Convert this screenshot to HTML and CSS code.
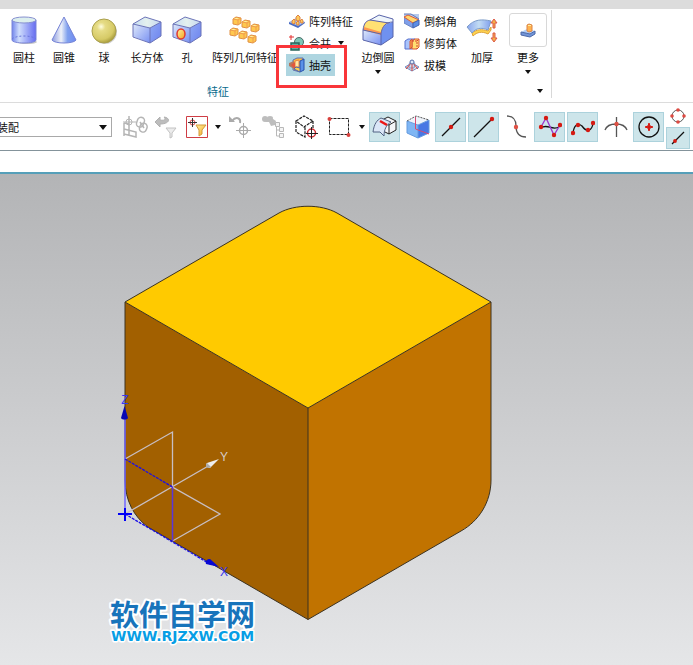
FILE: index.html
```html
<!DOCTYPE html>
<html lang="zh-CN">
<head>
<meta charset="utf-8">
<title>特征</title>
<link rel="stylesheet" href="styles.css">
</head>
<body>
<svg class="defs" aria-hidden="true">
  <defs>
    <linearGradient id="blueH"><stop offset="0" stop-color="#7285ec"/><stop offset=".3" stop-color="#cfddfc"/><stop offset="1" stop-color="#656cf0"/></linearGradient>
    <linearGradient id="coneH"><stop offset="0" stop-color="#8b9ae0"/><stop offset=".38" stop-color="#eef1f8"/><stop offset=".65" stop-color="#7fa0ee"/><stop offset="1" stop-color="#6f8af2"/></linearGradient>
    <linearGradient id="faceL" x1="0" y1="0" x2="1" y2="1"><stop offset="0" stop-color="#dfe9fa"/><stop offset="1" stop-color="#7890f2"/></linearGradient>
    <linearGradient id="faceR" x1="0" y1="0" x2="1" y2="1"><stop offset="0" stop-color="#8fa9f5"/><stop offset="1" stop-color="#6d83ee"/></linearGradient>
    <linearGradient id="faceT"><stop offset="0" stop-color="#c7dcf3"/><stop offset=".5" stop-color="#e4f1ee"/><stop offset="1" stop-color="#c4d8f0"/></linearGradient>
    <linearGradient id="gold" x1="0" y1="0" x2="1" y2="1"><stop offset="0" stop-color="#fff2a0"/><stop offset="1" stop-color="#f5a31c"/></linearGradient>
    <linearGradient id="slab"><stop offset="0" stop-color="#8aa6ee"/><stop offset=".5" stop-color="#c2dcf3"/><stop offset="1" stop-color="#7f9fee"/></linearGradient>
    <radialGradient id="ball" cx=".38" cy=".32" r=".7"><stop offset="0" stop-color="#fffde0"/><stop offset=".25" stop-color="#e6dc86"/><stop offset=".75" stop-color="#d6ca66"/><stop offset="1" stop-color="#a89c3c"/></radialGradient>
    <symbol id="cube" viewBox="0 0 30 28">
      <path d="M1 8 18 12V27L1 20.500Z" fill="url(#faceL)"/>
      <path d="M18 12 29 6V20L18 27Z" fill="url(#faceR)"/>
      <path d="M1 8 13 1 29 6 18 12Z" fill="url(#faceT)"/>
      <path d="M1 8 13 1 29 6V20L18 27 1 21ZM1 8 18 12 29 6M18 12V27" fill="none" stroke="#6b73b8"/>
    </symbol>
    <symbol id="caret" viewBox="0 0 6 4"><path d="M0 0H6L3 4Z" fill="#111"/></symbol>
    <symbol id="block" viewBox="0 0 10 10"><path d="M1 3 4 1 9 2V7L6 9 1 8Z" fill="#ffc84e" stroke="#e09044"/><path d="M1 3 6 4 9 2M6 4V9" stroke="#f09c50" fill="none"/><path d="M2 3 4 2 7 2 5 3Z" fill="#fff0a0"/></symbol>
  </defs>
</svg>

<div class="title-strip"></div>
<header class="ribbon">
  <section class="group" aria-label="特征">
    <div class="tools">
      <button class="tool">
        <span class="pic"><svg width="28" height="30" viewBox="0 0 28 30"><ellipse cx="17" cy="27" rx="10" ry="2" fill="#c8c8c8"/><path d="M2 5V25C2 29 26 29 26 25V5Z" fill="url(#blueH)" stroke="#7b86d8"/><ellipse cx="14" cy="5" rx="12" ry="3" fill="#dcefed" stroke="#8790d0"/><path d="M2 24C6 20 22 20 26 24" fill="none" stroke="#6a76da" stroke-dasharray="2 2"/></svg></span>
        <span>圆柱</span></button>
      <button class="tool">
        <span class="pic"><svg width="26" height="30" viewBox="0 0 26 30"><path d="M13 2 1 25C3 29 23 29 25 25Z" fill="url(#coneH)" stroke="#7684d6"/></svg></span>
        <span>圆锥</span></button>
      <button class="tool">
        <span class="pic"><svg width="28" height="28" viewBox="0 0 28 28"><circle cx="15" cy="16" r="12" fill="#cfcfcf"/><circle cx="14" cy="15" r="12" fill="url(#ball)" stroke="#aaa04d"/></svg></span>
        <span>球</span></button>
      <button class="tool tool-wide">
        <span class="pic"><svg width="30" height="28"><use href="#cube"/></svg></span>
        <span>长方体</span></button>
      <button class="tool tool-slim">
        <span class="pic"><svg width="30" height="28"><use href="#cube"/><ellipse cx="9" cy="18" rx="4" ry="5" fill="url(#gold)" stroke="#e23a2c" stroke-width="1.500"/></svg></span>
        <span>孔</span></button>
      <button class="tool tool-array">
        <span class="pic"><svg width="32" height="30" viewBox="0 0 32 30"><use href="#block" x="3" y="1" width="10" height="10"/><use href="#block" x="12" y="4" width="10" height="10"/><use href="#block" x="21" y="8" width="10" height="10"/><use href="#block" x="0" y="12" width="10" height="10"/><use href="#block" x="9" y="15" width="10" height="10"/><use href="#block" x="18" y="19" width="10" height="10"/></svg></span>
        <span>阵列几何特征</span></button>

      <div class="stack">
        <button class="mini"><svg width="16" height="16" viewBox="0 0 16 16"><path d="M0 9 7 5 16 9 9 14Z" fill="#a9c4f2"/><path d="M0 9V11L9 15 16 10V9L9 13Z" fill="#496bc2"/><path d="M3 8 5 6 6 7V10L5 11 3 10ZM7 4 9 2 11 4V7L9 8 7 7ZM7 10 9 8 10 9V12L8 12ZM11 8 13 6 14 8V10L12 10Z" fill="#ffc95b" stroke="#dc8444"/></svg><span>阵列特征</span></button>
        <button class="mini"><svg width="16" height="16" viewBox="0 0 16 16"><circle cx="10" cy="7" r="4.500" fill="#7ec7b7" stroke="#4b6c68"/><path d="M2 8H10V15H2Z" fill="#5fae9f" stroke="#28665d" stroke-width="1.500"/><path d="M2 0V5M0 2H5" stroke="#e33131"/></svg><span>合并</span><svg class="caret" width="6" height="4"><use href="#caret"/></svg></button>
        <button class="mini mini-active"><svg width="16" height="16" viewBox="0 0 16 16"><path d="M4 3 8 1H14V12L11 15 4 13Z" fill="#ffbd42" stroke="#5c6eb4"/><path d="M6 4 10 3V10L6 10Z" fill="#ffe6a4" stroke="#e98242"/><path d="M11 4 15 2V13L11 15Z" fill="#5b92e8" stroke="#2751ac"/><path d="M0 6 5 4V12L0 9Z" fill="#b5785f"/><path d="M2 8 6 5V12Z" fill="#e4553c"/><path d="M5 12 7 10 11 11V15Z" fill="#ffcf4c" stroke="#4c67b0"/></svg><span>抽壳</span></button>
      </div>

      <button class="tool">
        <span class="pic"><svg width="32" height="32" viewBox="0 0 32 32"><path d="M1 16 19 20V31L1 26Z" fill="url(#faceL)"/><path d="M19 20C20 12 24 9 31 8V23L19 31Z" fill="#6f91ef"/><path d="M8 6 17 1 31 5V8L26 9Z" fill="#eef5fb"/><path d="M1 16C2 10 4 7 8 6L27 9C22 10 20 14 19 21Z" fill="#ff9850"/><path d="M2 13C3 9 5 7 8 6L25 9C21 11 20 15 19 18Z" fill="#ffe173"/><path d="M1 16C2 9 4 7 8 6L17 1 31 5V23L19 31 1 26ZM1 16 19 20V31M19 20C20 12 24 8 31 8M8 6 27 9" fill="none" stroke="#5964aa"/></svg></span>
        <span>边倒圆</span><svg class="caret" width="6" height="4"><use href="#caret"/></svg></button>

      <div class="stack stack-second">
        <button class="mini"><svg width="16" height="16" viewBox="0 0 16 16"><path d="M0 1H15V11L10 15 0 9Z" fill="#b6c9ec"/><path d="M0 4 9 9V15L0 10Z" fill="#7f9fe9" stroke="#6a84c4"/><path d="M0 4 4 2 15 7 9 10Z" fill="#ffd66d" stroke="#e25c32"/><path d="M9 10 15 7V12L9 15Z" fill="#5c8ee6" stroke="#4765b0"/><path d="M0 1H7L15 6" fill="none" stroke="#6079b9"/></svg><span>倒斜角</span></button>
        <button class="mini"><svg width="16" height="16" viewBox="0 0 16 16"><path d="M1 6 4 4H11L8 6V14H1Z" fill="#a9c4fc" stroke="#5971ce"/><path d="M8 6 11 4H15V12L13 14H8Z" fill="#ffdf72" stroke="#d75635"/><path d="M8 6H13V14M13 6 15 4" fill="none" stroke="#d64132" stroke-dasharray="2 1"/><path d="M6 6 8 4V12L6 14Z" fill="#ffa94e" stroke="#d75635"/></svg><span>修剪体</span></button>
        <button class="mini"><svg width="16" height="16" viewBox="0 0 16 16"><path d="M1 10 8 6 15 10 8 14Z" fill="#f5e0e0" stroke="#708bc2"/><path d="M5 7 8 3 11 7 10 11H5Z" fill="#c9dcf5" stroke="#7c96c8"/><path d="M8 5V14M8 5 2 12M8 5 14 12" stroke="#d94339"/><circle cx="8" cy="5" r="2" fill="#dde9f9" stroke="#566fa9"/></svg><span>拔模</span></button>
      </div>

      <button class="tool">
        <span class="pic"><svg width="32" height="28" viewBox="0 0 32 28"><path d="M6 17C11 13 16 13 22 15L25 11V14L22 18C16 15 11 16 7 20Z" fill="#ffd451" stroke="#dda239"/><path d="M1 11C8 3 16 3 25 5L22 14C15 11 10 12 6 17Z" fill="url(#slab)" stroke="#7c9cc8"/><path d="M28 3 31 7H29V12H27V7H25ZM28 26 25 22H27V17H29V22H31Z" fill="#f4ae48" stroke="#dc5848"/></svg></span>
        <span>加厚</span></button>
      <button class="tool tool-more">
        <span class="pic pic-framed"><svg width="18" height="18" viewBox="0 0 18 18"><path d="M2 11 8 8 16 10 11 13Z" fill="#b4cff6"/><path d="M2 11V14L11 16 16 13V10L11 13Z" fill="#7295d8" stroke="#4c69a8"/><path d="M8 4 10 3 13 4V10L10 11 8 10Z" fill="#ffb350" stroke="#dc8444"/><path d="M9 4H12V5H9Z" fill="#fff09b"/></svg></span>
        <span>更多</span><svg class="caret" width="6" height="4"><use href="#caret"/></svg></button>
    </div>
    <div class="group-foot"><span>特征</span><button class="foot-menu" aria-label="特征选项"><svg width="6" height="4"><use href="#caret"/></svg></button></div>
  </section>
</header>

<nav class="selection" aria-label="选择">
  <div class="scope">
    <select aria-label="选择范围"><option>装配</option></select>
    <svg class="scope-caret" width="8" height="5" viewBox="0 0 8 5"><path d="M0 0H8L4 5Z" fill="#111"/></svg>
  </div>
  <div class="filters">
    <button class="icon" aria-label="关联"><svg width="26" height="24" viewBox="0 0 26 24" fill="none" stroke="#b5b5b5"><path d="M2 8V21M2 8 7 9M2 14 14 17V22L2 19M7 1V20M14 17V22" stroke-width="1.500"/><circle cx="7" cy="7" r="3"/><path d="M1 7H14"/><g stroke-width="1.500"><rect x="15" y="2" width="7" height="10" rx="3.500" transform="rotate(20 18 7)"/><rect x="18" y="8" width="7" height="9" rx="3.500" transform="rotate(20 21 12)"/><path d="M18 7 22 13"/></g></svg></button>
    <button class="icon" aria-label="重置过滤器"><svg width="24" height="24" viewBox="0 0 24 24"><path d="M1 7 6 2V5C11 6 12 4 10 2 17 3 16 9 6 9V12Z" fill="#bdbdbd" stroke="#b0b0b0"/><path d="M12 13H22L18 18V22L16 23V18Z" fill="#ececec" stroke="#c2c2c2"/></svg></button>
    <button class="icon" aria-label="常规选择过滤器"><svg width="22" height="22" viewBox="0 0 22 22"><path d="M.5.5H21.500V21.500H.5Z" fill="#fff" stroke="#cf3d45"/><circle cx="6.500" cy="6.500" r="2.500" fill="none" stroke="#db4545"/><path d="M2 6.500H11M6.500 2V11" stroke="#333"/><path d="M10 9H20L16 14V18L13 20V14Z" fill="url(#gold)" stroke="#d39a3c"/></svg></button>
    <button class="drop" aria-label="过滤器选项"><svg width="6" height="4"><use href="#caret"/></svg></button>
  </div>
  <div class="pickers">
    <button class="icon" aria-label="恢复"><svg width="24" height="24" viewBox="0 0 24 24" fill="none" stroke="#aaa"><path d="M4 6C8 1 13 3 12 8" stroke-width="2"/><path d="M1 1V7H7Z" fill="#aaa" stroke="none"/><circle cx="15.500" cy="15.500" r="4" stroke-width="1.500"/><path d="M15.500 8V23M8 15.500H23"/></svg></button>
    <button class="icon" aria-label="查找组件"><svg width="24" height="24" viewBox="0 0 24 24" fill="#bdbdbd"><ellipse cx="4" cy="4" rx="3" ry="3"/><ellipse cx="9" cy="3" rx="3" ry="2"/><path d="M3 5 9 2 15 6 14 10 10 11 8 7 5 7Z"/><g fill="#f4f4f4" stroke="#b8b8b8"><path d="M14.500 7.500H18.500V11.500H14.500ZM18.500 12.500H22.500V16.500H18.500ZM18.500 18.500H22.500V22.500H18.500Z"/><path d="M15.500 12V21H18M15.500 15H18" fill="none"/></g></svg></button>
    <button class="icon" aria-label="体选择"><svg width="24" height="24" viewBox="0 0 24 24" fill="none"><path d="M2 6 10 1 19 6 10 12ZM2 6V17L11 22V12M19 6V13" stroke="#222" stroke-width="1.200" stroke-dasharray="3 1"/><circle cx="17.500" cy="18" r="4" stroke="#d22b32" stroke-width="1.500"/><path d="M17.500 12V24M12 18.500H24" stroke="#222"/></svg></button>
    <button class="icon" aria-label="矩形选择"><svg width="24" height="22" viewBox="0 0 24 22"><path d="M2.500 2.500H21.500V18.500H2.500Z" fill="none" stroke="#222" stroke-dasharray="3 1"/><circle cx="2.500" cy="3" r="2" fill="#d9403c"/><circle cx="21.500" cy="19" r="2" fill="#d9403c"/></svg></button>
    <button class="drop" aria-label="选择方式"><svg width="6" height="4"><use href="#caret"/></svg></button>
  </div>
  <div class="snaps">
    <button class="icon on" aria-label="面"><svg width="26" height="24" viewBox="0 0 26 24"><path d="M10 5 16 2 24 6V15L17 19 11 16Z" fill="#f3f5f8" stroke="#222"/><path d="M12 8 17 10 24 6M17 10V19" fill="none" stroke="#222"/><path d="M1 17C2 9 5 5 9 3L19 7C14 10 12 15 12 21L8 17Z" fill="#dbe7f7" stroke="#526283"/><path d="M8 6 15 10" stroke="#ed1616" stroke-width="2.500"/></svg></button>
    <button class="icon" aria-label="着色面"><svg width="24" height="24" viewBox="0 0 24 24"><path d="M1 6 12 10V23L1 18Z" fill="#7fb6f4"/><path d="M12 10 23 5V18L12 23Z" fill="#4777e4"/><path d="M1 6 10 1 23 5 12 10Z" fill="#eef3fa"/><path d="M1 6V18L12 23 23 18V5M1 6 12 10 23 5M12 10V23" fill="none" stroke="#659bdf"/><path d="M1 6 10 1 23 5" fill="none" stroke="#555" stroke-dasharray="2 1"/><path d="M9.500 2V14L23 19" fill="none" stroke="#d84a72"/></svg></button>
    <button class="icon on" aria-label="中点"><svg width="24" height="24" viewBox="0 0 24 24"><path d="M3 21 21 3" stroke="#111" stroke-width="1.300"/><circle cx="12" cy="12" r="2.200" fill="#d51a12"/></svg></button>
    <button class="icon on" aria-label="端点"><svg width="24" height="24" viewBox="0 0 24 24"><path d="M2 22 20 4" stroke="#111" stroke-width="1.300"/><circle cx="20" cy="4" r="2.200" fill="#d51a12"/></svg></button>
    <button class="icon" aria-label="拐点"><svg width="24" height="24" viewBox="0 0 24 24"><path d="M2 1C9 1 11 5 11 11 11 18 14 22 21 22" fill="none" stroke="#555" stroke-width="1.300"/><circle cx="11" cy="12" r="2.200" fill="#df5145"/></svg></button>
    <button class="icon on" aria-label="控制点"><svg width="24" height="24" viewBox="0 0 24 24"><path d="M3 13C9 8 14 16 21 12" fill="none" stroke="#111" stroke-width="1.300"/><path d="M3 12 8 3 16 20 22 10" fill="none" stroke="#9b35cc" stroke-width="1.300"/><g fill="#d51a12"><circle cx="3" cy="12" r="2.200"/><circle cx="8" cy="3" r="2.200"/><circle cx="16" cy="20" r="2.200"/><circle cx="22" cy="10" r="2.200"/></g></svg></button>
    <button class="icon on" aria-label="极点"><svg width="24" height="24" viewBox="0 0 24 24"><path d="M2 18C3 11 6 7 11 11 16 18 21 16 22 8" fill="none" stroke="#111" stroke-width="1.300"/><g fill="#d51a12"><circle cx="2" cy="18" r="2.200"/><circle cx="7" cy="10" r="2.200"/><circle cx="17" cy="15" r="2.200"/><circle cx="22" cy="8" r="2.200"/></g></svg></button>
    <button class="icon" aria-label="交点"><svg width="24" height="24" viewBox="0 0 24 24"><path d="M1 15C4 7 20 7 23 15M12.500 2V22" fill="none" stroke="#555" stroke-width="1.300"/><circle cx="12.500" cy="9" r="2.200" fill="#df5145"/></svg></button>
    <button class="icon on" aria-label="圆心"><svg width="24" height="24" viewBox="0 0 24 24"><circle cx="12" cy="12" r="10" fill="none" stroke="#111" stroke-width="1.300"/><path d="M12 8 13 11 16 12 13 13 12 16 11 13 8 12 11 11Z" fill="#d51a12" stroke="#d51a12"/></svg></button>
    <div class="snap-pair">
      <button class="icon small" aria-label="象限点"><svg width="16" height="16" viewBox="0 0 16 16"><circle cx="8" cy="8" r="6" fill="none" stroke="#555"/><g fill="#df4a42"><circle cx="8" cy="2" r="1.800"/><circle cx="8" cy="14" r="1.800"/><circle cx="2" cy="8" r="1.800"/><circle cx="14" cy="8" r="1.800"/></g></svg></button>
      <button class="icon small on" aria-label="曲线上的点"><svg width="16" height="16" viewBox="0 0 16 16"><path d="M2 14 14 2" stroke="#111" stroke-width="1.300"/><circle cx="5" cy="11" r="1.900" fill="#d51a12"/></svg></button>
    </div>
  </div>
</nav>
<div class="cue"></div>

<main class="viewport">
  <svg viewBox="0 174 693 491" preserveAspectRatio="xMidYMin meet">
    <path d="M125 302 308 408V619.500L148 527C134 517 125 500 125 480Z" fill="#a26000"/>
    <path d="M308 408 491 302V480C491 502 479 521 461 531L308 619.500Z" fill="#c17300"/>
    <path d="M125 302 279 213C295 204 321 204 337 213L491 302 308 408Z" fill="#ffca00"/>
    <path d="M125 302 279 213C295 204 321 204 337 213L491 302V480C491 502 479 521 461 531L308 619.500 148 527C134 517 125 500 125 480ZM125 302 308 408 491 302M308 408V619.500" fill="none" stroke="#3c3220"/>
    <g fill="none" stroke="#c8bfc4" stroke-width="1.300">
      <path d="M125 459 172.500 432V487L220 514 172.500 541M125 514 210 465"/>
    </g>
    <path d="M125 514V418" stroke="#7166ff" stroke-width="1.500"/>
    <path d="M172.500 487V541" stroke="#5836d8" stroke-width="1.500"/>
    <path d="M125 459 172.500 487M125 514 210 564" stroke="#1a0ee8" stroke-width="1.300" stroke-dasharray="3 1"/>
    <path d="M118 514H132M125 508V521" stroke="#0000f5" stroke-width="2"/>
    <path d="M124.500 406 128 418C127 420 122 420 121 418Z" fill="#0808b4"/>
    <path d="M219 567 206 564C205 561 207 559 210 559Z" fill="#0808d4"/>
    <path d="M219 459 207 463C205 465 207 468 210 468Z" fill="#eee"/>
    <path d="M207 463 211 467 209 468C206 468 205 465 207 463Z" fill="#aaa"/>
    <g class="axis"><text x="125" y="404" fill="#3838f5">Z</text><text x="224" y="461" fill="#d5cccb">Y</text><text x="224" y="576" fill="#3434ee">X</text></g>
    <text class="brand" x="110" y="626">软件自学网</text>
    <text class="brand-url" x="111" y="641">WWW.RJZXW.COM</text>
  </svg>
</main>
</body>
</html>
```
FILE: styles.css
```css
* { box-sizing: border-box; }

body {
  margin: 0;
  min-height: 100vh;
  display: flex;
  flex-direction: column;
  overflow-x: hidden;
  background: #fff;
  color: #111;
  font: 11px/16px "Noto Sans CJK SC", sans-serif;
}

button {
  margin: 0;
  padding: 0;
  border: 0;
  background: none;
  color: inherit;
  font: inherit;
  white-space: nowrap;
}

svg { display: block; flex: none; }
.defs { position: absolute; width: 0; height: 0; }

.title-strip { height: 9px; background: #dcdcdc; }

/* Ribbon */
.ribbon {
  display: flex;
  padding: 1px 0 4px;
  border-bottom: 1px solid #dcdcdc;
}
.group { padding-left: 4px; border-right: 1px solid #d8d8d8; }
.tools { display: flex; height: 74px; }

.tool {
  display: flex;
  flex-direction: column;
  align-items: center;
  width: 40px;
  padding-top: 3px;
}
.tool-wide { width: 46px; }
.tool-slim { width: 34px; }
.tool-array { width: 82px; }
.tool-more { width: 52px; margin-right: -3px; }
.pic {
  display: flex;
  align-items: center;
  justify-content: center;
  height: 34px;
  margin-bottom: 2px;
}
.pic-framed { width: 38px; border: 1px solid #d8d8d8; border-radius: 3px; }
.tool .caret { margin-top: 5px; }

.stack { display: flex; flex-direction: column; align-items: flex-start; width: 72px; }
.stack-second { width: 64px; padding-left: 3px; }
.mini {
  display: flex;
  align-items: center;
  gap: 4px;
  height: 22px;
  padding: 0 4px 0 3px;
}
.mini .caret { margin-left: 3px; }
.mini-active { position: relative; background: #aed5e0; }
.mini-active::after {
  content: "";
  position: absolute;
  inset: -9px -12px -12px -10px;
  border: 3px solid #f93539;
}

.group-foot {
  display: flex;
  align-items: center;
  justify-content: space-between;
  height: 14px;
  padding: 0 8px 0 203px;
  color: #086a8c;
}

/* Selection bar */
.selection {
  display: flex;
  align-items: center;
  height: 48px;
  border-bottom: 1px solid #84939b;
}
.scope { position: relative; width: 112px; margin-right: 7px; }
.scope select {
  display: block;
  width: 120px;
  height: 20px;
  margin-left: -8px;
  padding: 0 16px 0 4px;
  appearance: none;
  border: 1px solid #a9a9a9;
  border-radius: 0;
  background: #fff;
  color: #111;
  font: inherit;
}
.scope-caret { position: absolute; right: 5px; top: 8px; pointer-events: none; }
.filters, .pickers, .snaps { display: flex; align-items: center; }
.pickers, .snaps { gap: 2px; }
.snaps { margin-left: 1px; }
.drop { display: flex; align-items: center; justify-content: center; width: 12px; height: 30px; }
.icon {
  display: flex;
  align-items: center;
  justify-content: center;
  width: 31px;
  height: 30px;
  border: 1px solid transparent;
}
.on { background: #cde5ea; border-color: #acd2dc; }
.small { width: 24px; height: 22px; }
.snap-pair { display: flex; flex-direction: column; }
.cue { height: 23px; border-bottom: 2px solid #559fb9; }

/* Model view */
.viewport {
  flex: 1;
  min-height: 0;
  background: linear-gradient(#b3b4b6, #e5e6e8);
}
.viewport svg { width: 100%; }
.axis { font: 12px "Liberation Sans", sans-serif; text-anchor: middle; }
.brand, .brand-url { stroke: #fff; stroke-linejoin: round; paint-order: stroke; font-weight: 700; }
.brand { fill: #1874bb; stroke-width: 4px; font-size: 29px; }
.brand-url { fill: #079ee5; stroke-width: 3px; font-family: "DejaVu Sans", sans-serif; font-size: 14px; }
```
